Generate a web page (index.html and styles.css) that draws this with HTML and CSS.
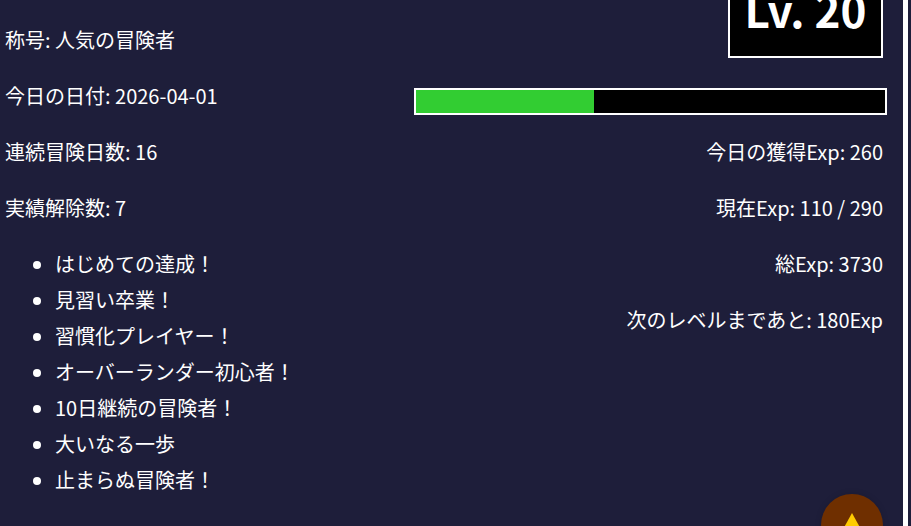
FILE: index.html
```html
<!DOCTYPE html>
<html lang="ja">
<head>
  <meta charset="UTF-8" />
  <meta name="viewport" content="width=device-width, initial-scale=1.0"/>
  <title>冒険者ステータス</title>
  <link rel="stylesheet" href="styles.css">
</head>
<body>
  <div class="frame">
    <main class="status">
      <section class="left-col">
        <p>称号: 人気の冒険者</p>
        <p>今日の日付: 2026-04-01</p>
        <p>連続冒険日数: 16</p>
        <p>実績解除数: 7</p>
        <ul class="achievements">
          <li>はじめての達成！</li>
          <li>見習い卒業！</li>
          <li>習慣化プレイヤー！</li>
          <li>オーバーランダー初心者！</li>
          <li>10日継続の冒険者！</li>
          <li>大いなる一歩</li>
          <li>止まらぬ冒険者！</li>
        </ul>
      </section>
      <section class="right-col">
        <div class="level-box">Lv. 20</div>
        <div class="exp-bar">
          <div class="exp-fill" style="width: 37.9%"></div>
        </div>
        <p>今日の獲得Exp: 260</p>
        <p>現在Exp: 110 / 290</p>
        <p>総Exp: 3730</p>
        <p>次のレベルまであと: 180Exp</p>
      </section>
    </main>
  </div>
  <button class="top-btn" aria-label="ページ上部へ"><span class="top-arrow"></span></button>
</body>
</html>
```

FILE: styles.css
```css
* { box-sizing: border-box; }
html, body { height: 100%; }
body { margin: 0; overflow: hidden; background: #1e1e3a; color: #fff; font-family: "Noto Sans CJK JP", "Noto Sans", sans-serif; font-size: 20px; line-height: 1.8; }
p { margin: 0 0 20px; }

.frame { width: 908px; height: 526px; border-right: 5px solid #fff; overflow: hidden; }
.status { display: flex; justify-content: space-between; padding-left: 5px; margin-top: -6px; padding-right: 16px; }

.left-col { padding-top: 28px; }
.achievements { margin: 0; padding-left: 50px; }

.right-col { width: 473px; display: flex; flex-direction: column; text-align: right; }
.right-col p { padding-right: 4px; }

.level-box { align-self: flex-end; width: 155px; height: 78px; margin-right: 4px; margin-top: -14px; border: 2px solid #fff; background: #000; font-size: 44px; font-weight: 700; line-height: 54px; text-align: center; }

.exp-bar { height: 27px; margin: 30px 0 19px; border: 2px solid #fff; background: #000; }
.exp-fill { height: 100%; background: #32cd32; }

.top-btn { position: fixed; left: 821px; top: 494px; width: 62px; height: 62px; padding: 0; border: none; border-radius: 50%; background: #6f2f00; box-shadow: 0 0 6px rgba(0,0,0,.15); }
.top-arrow { position: absolute; left: 20px; top: 19px; width: 0; height: 0; border-left: 11px solid transparent; border-right: 11px solid transparent; border-bottom: 20px solid #ffcc00; }
```
